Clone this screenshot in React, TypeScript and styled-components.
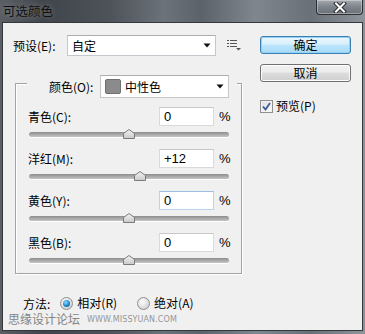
import React from "react";
import styled, { createGlobalStyle } from "styled-components";

const GlobalStyle = createGlobalStyle`
  html, body {
    margin: 0;
    padding: 0;
    background: #ffffff;
  }
  * {
    box-sizing: border-box;
  }
`;

const Window = styled.div`
  width: 365px;
  height: 334px;
  display: flex;
  flex-direction: column;
  font-family: "Noto Sans CJK SC", "Liberation Sans", sans-serif;
  font-size: 12px;
  color: #000;
  background: linear-gradient(
    90deg,
    #5a5f65 0%,
    #40454b 12%,
    #4e535a 30%,
    #6c7279 45%,
    #5c6269 55%,
    #80868d 70%,
    #6a7077 85%,
    #8e949a 100%
  );
`;

const TitleBar = styled.div`
  height: 22px;
  display: flex;
  justify-content: space-between;
  align-items: flex-start;
`;

const Title = styled.div`
  padding: 2px 0 0 3px;
  font-size: 12.5px;
  line-height: 17px;
  color: #111;
  text-shadow: 0 0 6px rgba(255, 255, 255, 0.35);
`;

const CloseButton = styled.div`
  width: 47px;
  height: 15px;
  margin-right: 2px;
  border: 1px solid #2c3034;
  border-top: none;
  border-radius: 0 0 4px 4px;
  background: linear-gradient(#a3a9af, #7d838a 50%, #6b7178);
  box-shadow: inset 0 0 0 1px rgba(255, 255, 255, 0.35);
  display: flex;
  align-items: center;
  justify-content: center;
`;

const Body = styled.div`
  flex: 1;
  margin: 0 2px 3px 2px;
  border: 1px solid #34383c;
  background: #f0f0f0;
  display: flex;
  flex-direction: column;
`;

const Top = styled.div`
  display: flex;
`;

const Main = styled.div`
  width: 238px;
  padding: 12px 0 0 10px;
  display: flex;
  flex-direction: column;
`;

const PresetRow = styled.div`
  height: 21px;
  display: flex;
  align-items: center;
`;

const Label = styled.span<{ $width?: number }>`
  width: ${(p) => (p.$width ? `${p.$width}px` : "auto")};
  flex: ${(p) => (p.$width ? "none" : "1")};
  line-height: 16px;
  white-space: nowrap;
`;

const Select = styled.div<{ $width: number; $height: number }>`
  width: ${(p) => p.$width}px;
  height: ${(p) => p.$height}px;
  background: #fff;
  border: 1px solid #c5c7cc;
  border-top-color: #abadb3;
  display: flex;
  align-items: center;
  padding: 0 4px 0 4px;
  gap: 4px;
`;

const SelectText = styled.span`
  flex: 1;
  line-height: 16px;
`;

const Swatch = styled.span`
  width: 16px;
  height: 15px;
  border-radius: 2px;
  border: 1px solid #707070;
  background: #8b8b8b;
`;

const IconSlot = styled.div`
  margin-left: 11px;
  display: flex;
  align-items: center;
`;

const Group = styled.div`
  margin: 27px 0 0 2px;
  width: 227px;
  border: 1px solid #a3a3a3;
  box-shadow: inset 1px 1px 0 #fff, 1px 1px 0 #fff;
  padding: 0 11px 6px 12px;
  display: flex;
  flex-direction: column;
`;

const Legend = styled.div`
  align-self: flex-start;
  margin: -9px 0 9px -1px;
  padding: 0 8px 0 22px;
  background: #f0f0f0;
  display: flex;
  align-items: center;
`;

const SliderRow = styled.div`
  display: flex;
  flex-direction: column;
  & + & {
    margin-top: 8px;
  }
`;

const RowHead = styled.div`
  height: 19px;
  display: flex;
  align-items: center;
`;

const NumberBox = styled.div<{ $focus?: boolean }>`
  width: 55px;
  height: 19px;
  background: #fff;
  border: 1px solid ${(p) => (p.$focus ? "#b9d4ec" : "#dadada")};
  border-top-color: ${(p) => (p.$focus ? "#9cc0e2" : "#c8c8c8")};
  padding-left: 4px;
  display: flex;
  align-items: center;
  line-height: 16px;
  font-family: "Liberation Sans", "Noto Sans CJK SC", sans-serif;
  font-size: 13px;
`;

const Percent = styled.span`
  margin-left: 5px;
  width: 11px;
  font-family: "Liberation Sans", sans-serif;
  font-size: 13px;
  line-height: 16px;
`;

const SliderArea = styled.div`
  height: 15px;
  margin: 0 1px;
  position: relative;
`;

const Track = styled.div`
  margin-top: 6px;
  height: 5px;
  border-radius: 3px;
  background: linear-gradient(#8c8c8c, #a9a9a9 50%, #c4c4c4);
  box-shadow: 0 1px 0 #fff;
`;

const Thumb = styled.div`
  position: absolute;
  top: 3px;
  margin-left: -6px;
  width: 12px;
  height: 10px;
  display: flex;
`;

const MethodRow = styled.div`
  margin-top: 21px;
  height: 16px;
  padding-left: 20px;
  display: flex;
  align-items: center;
`;

const Option = styled.div<{ $gap: number }>`
  display: flex;
  align-items: center;
  margin-left: ${(p) => p.$gap}px;
  gap: 4px;
  line-height: 16px;
`;

const Radio = styled.span<{ $on?: boolean }>`
  width: 13px;
  height: 13px;
  border-radius: 50%;
  border: 1px solid #8e8f8f;
  background: radial-gradient(circle at 40% 35%, #ffffff, #d6d6d6 70%, #c4c4c4);
  display: flex;
  align-items: center;
  justify-content: center;
  &::after {
    content: "";
    display: ${(p) => (p.$on ? "block" : "none")};
    width: 7px;
    height: 7px;
    border-radius: 50%;
    background: radial-gradient(circle at 40% 35%, #8fdcff, #1d86c9 55%, #0b4f86);
  }
`;

const Watermark = styled.div`
  padding: 0 0 0 5px;
  height: 15px;
  display: flex;
  align-items: center;
  gap: 7px;
`;

const WatermarkCn = styled.span`
  font-size: 12px;
  line-height: 15px;
  color: #858585;
`;

const WatermarkUrl = styled.span`
  font-family: "DejaVu Sans", sans-serif;
  font-size: 8px;
  letter-spacing: 0.1px;
  color: #969696;
  padding-top: 2px;
`;

const Side = styled.div`
  margin: 13px 0 0 19px;
  width: 91px;
  display: flex;
  flex-direction: column;
`;

const Button = styled.div<{ $primary?: boolean }>`
  height: 18px;
  border-radius: 3px;
  border: 1px solid ${(p) => (p.$primary ? "#3c7fb1" : "#707070")};
  background: ${(p) =>
    p.$primary
      ? "linear-gradient(#eaf6fd, #d9f0fc 45%, #bee6fd 50%, #a7d9f5)"
      : "linear-gradient(#f2f2f2, #ebebeb 45%, #dddddd 50%, #cfcfcf)"};
  box-shadow: inset 0 0 0 1px ${(p) => (p.$primary ? "#93d2f5" : "#fcfcfc")};
  display: flex;
  align-items: center;
  justify-content: center;
  line-height: 16px;
  & + & {
    margin-top: 10px;
  }
`;

const CheckRow = styled.div`
  margin-top: 16px;
  display: flex;
  align-items: center;
  gap: 3px;
  line-height: 16px;
`;

const CheckBox = styled.span`
  width: 13px;
  height: 13px;
  border: 1px solid #8e8f8f;
  background: linear-gradient(135deg, #dcdcdc, #ffffff);
  box-shadow: inset 0 0 0 1px #f4f4f4;
  display: flex;
  align-items: center;
  justify-content: center;
`;

const Arrow = () => (
  <svg width="8" height="5" viewBox="0 0 8 5">
    <path d="M0.5 0.5 H7.5 L4 4.5 Z" fill="#111" />
  </svg>
);

const ListIcon = () => (
  <svg width="14" height="11" viewBox="0 0 14 11">
    <g fill="#555">
      <rect x="0" y="0" width="2" height="1" />
      <rect x="3" y="0" width="7" height="1" />
      <rect x="0" y="3" width="2" height="1" />
      <rect x="3" y="3" width="7" height="1" />
      <rect x="0" y="6" width="2" height="1" />
      <rect x="3" y="6" width="7" height="1" />
      <path d="M9 8 H14 L11.5 10.5 Z" />
    </g>
  </svg>
);

const ThumbIcon = () => (
  <svg width="12" height="10" viewBox="0 0 12 10">
    <defs>
      <linearGradient id="thumbFill" x1="0" y1="0" x2="0" y2="1">
        <stop offset="0" stopColor="#f4f4f4" />
        <stop offset="1" stopColor="#c9c9c9" />
      </linearGradient>
    </defs>
    <path d="M0.5 9.5 V4.5 L6 0.5 L11.5 4.5 V9.5 Z" fill="url(#thumbFill)" stroke="#7a7a7a" />
  </svg>
);

type Channel = { label: string; value: number; focus?: boolean };

const channels: Channel[] = [
  { label: "青色(C):", value: 0 },
  { label: "洋红(M):", value: 12 },
  { label: "黄色(Y):", value: 0, focus: true },
  { label: "黑色(B):", value: 0 },
];

const TRACK_WIDTH = 199;

const App = () => {
  return (
    <>
      <GlobalStyle />
      <Window>
        <TitleBar>
          <Title>可选颜色</Title>
          <CloseButton>
            <svg width="14" height="11" viewBox="0 0 14 11">
              <path d="M3 1.5 L11 9.5 M11 1.5 L3 9.5" stroke="#2a2e33" strokeWidth="4" strokeLinecap="square" />
              <path d="M3 1.5 L11 9.5 M11 1.5 L3 9.5" stroke="#ffffff" strokeWidth="2" strokeLinecap="square" />
            </svg>
          </CloseButton>
        </TitleBar>
        <Body>
          <Top>
            <Main>
              <PresetRow>
                <Label $width={54}>预设(E):</Label>
                <Select $width={150} $height={21}>
                  <SelectText>自定</SelectText>
                  <Arrow />
                </Select>
                <IconSlot>
                  <ListIcon />
                </IconSlot>
              </PresetRow>

              <Group>
                <Legend>
                  <Label $width={51}>颜色(O):</Label>
                  <Select $width={129} $height={23}>
                    <Swatch />
                    <SelectText>中性色</SelectText>
                    <Arrow />
                  </Select>
                </Legend>

                {channels.map((c) => {
                  const pos = ((c.value + 100) / 200) * TRACK_WIDTH;
                  return (
                    <SliderRow key={c.label}>
                      <RowHead>
                        <Label>{c.label}</Label>
                        <NumberBox $focus={c.focus}>
                          {c.value > 0 ? `+${c.value}` : c.value}
                        </NumberBox>
                        <Percent>%</Percent>
                      </RowHead>
                      <SliderArea>
                        <Track />
                        <Thumb style={{ left: pos }}>
                          <ThumbIcon />
                        </Thumb>
                      </SliderArea>
                    </SliderRow>
                  );
                })}
              </Group>
            </Main>

            <Side>
              <Button $primary>确定</Button>
              <Button>取消</Button>
              <CheckRow>
                <CheckBox>
                  <svg width="9" height="9" viewBox="0 0 9 9">
                    <path d="M1 4.5 L3.5 7.5 L8 1" fill="none" stroke="#3f5a95" strokeWidth="1.8" />
                  </svg>
                </CheckBox>
                <span>预览(P)</span>
              </CheckRow>
            </Side>
          </Top>

          <MethodRow>
            <span>方法:</span>
            <Option $gap={10}>
              <Radio $on />
              <span>相对(R)</span>
            </Option>
            <Option $gap={20}>
              <Radio />
              <span>绝对(A)</span>
            </Option>
          </MethodRow>

          <Watermark>
            <WatermarkCn>思缘设计论坛</WatermarkCn>
            <WatermarkUrl>WWW.MISSYUAN.COM</WatermarkUrl>
          </Watermark>
        </Body>
      </Window>
    </>
  );
};

export default App;
